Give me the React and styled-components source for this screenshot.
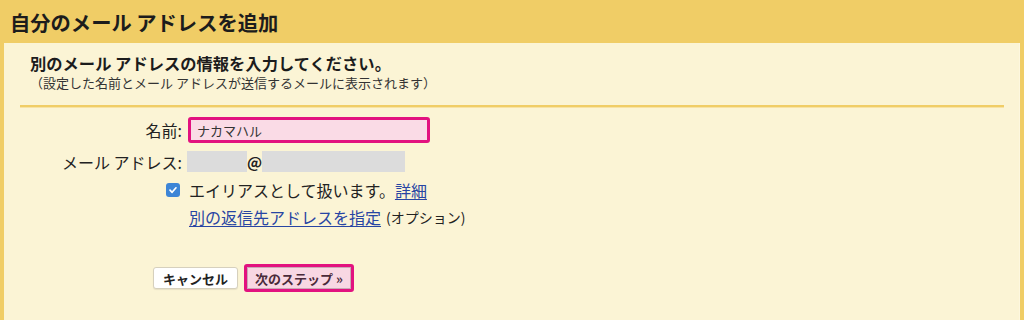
import styled, { createGlobalStyle } from "styled-components";

const GlobalStyle = createGlobalStyle`
  html, body {
    margin: 0;
    padding: 0;
    background: #f0cd66;
  }
  body {
    font-family: "Noto Sans CJK JP", "Noto Sans", sans-serif;
    color: #222;
  }
`;

const Page = styled.div`
  width: 1024px;
  height: 320px;
  overflow: hidden;
  background: #f0cd66;
  display: flex;
  flex-direction: column;
`;

const Header = styled.h1`
  margin: 0;
  height: 43px;
  padding-left: 10px;
  display: flex;
  align-items: center;
  font-size: 20.3px;
  font-weight: 700;
  color: #1c1c1c;
`;

const Panel = styled.div`
  flex: 1;
  margin: 0 4px;
  background: #fbf4d5;
  border-right: 1px solid #fdf7df;
  display: flex;
  flex-direction: column;
`;

const Intro = styled.div`
  padding: 9px 0 0 26px;
  height: 53px;
`;

const Lead = styled.div`
  font-size: 16.3px;
  font-weight: 700;
  line-height: 22px;
  color: #1c1c1c;
`;

const Note = styled.div`
  font-size: 13px;
  line-height: 18px;
  color: #333;
`;

const Divider = styled.hr`
  margin: 0 15px 0 16px;
  border: 0;
  height: 2px;
  background: #f0cd66;
  box-shadow: 0 1px 0 #f7e3a4;
`;

const Form = styled.div`
  padding-top: 10px;
  display: flex;
  flex-direction: column;
`;

const Row = styled.div`
  display: flex;
  align-items: center;
  height: ${(p) => p.h}px;
  margin-bottom: ${(p) => p.gap || 0}px;
`;

const Label = styled.div`
  width: 181px;
  font-size: 16px;
  color: #222;
  padding-right: 3px;
  box-sizing: border-box;
  margin-right: ${(p) => p.mr ?? 3}px;
  display: flex;
  justify-content: flex-end;
`;

const LabelPad = styled.div`
  width: 181px;
  display: flex;
  justify-content: flex-end;
  padding-right: 5px;
  box-sizing: border-box;
  margin-right: 4px;
`;

const NameInput = styled.div`
  width: 242px;
  height: 26px;
  box-sizing: border-box;
  border: 3px solid #e2127f;
  border-radius: 3px;
  background: #fadbe6;
  font-size: 13px;
  display: flex;
  align-items: center;
  padding-left: 6px;
  color: #333;
`;

const Masked = styled.div`
  width: ${(p) => p.w}px;
  height: 21px;
  background: #dcdcdc;
`;

const At = styled.span`
  width: 15px;
  text-align: center;
  font-size: 15px;
  font-weight: 700;
  color: #222;
`;

const Check = styled.span`
  width: 14px;
  height: 14px;
  border-radius: 3px;
  background: #3d85d6;
  display: flex;
  align-items: center;
  justify-content: center;
`;

const Text = styled.span`
  font-size: ${(p) => p.size || 16}px;
  margin-left: ${(p) => p.ml || 0}px;
  color: #222;
`;

const LinkText = styled.a`
  font-size: 16px;
  color: #2845a3;
  text-decoration: underline;
  text-underline-offset: 2px;
  margin-left: ${(p) => p.ml || 0}px;
`;

const Actions = styled.div`
  display: flex;
  align-items: center;
  gap: 6px;
  padding: 37px 0 0 149px;
`;

const Button = styled.button`
  font-family: "Noto Sans CJK JP", "Noto Sans", sans-serif;
  font-size: 13px;
  font-weight: 700;
  color: ${(p) => (p.primary ? "#4a2a3a" : "#222")};
  height: ${(p) => (p.primary ? 28 : 22)}px;
  padding: 0 ${(p) => (p.primary ? 8 : 9)}px;
  background: ${(p) => (p.primary ? "#f8d7e3" : "#fff")};
  border: ${(p) => (p.primary ? "3px solid #e2127f" : "1px solid #d6d0bd")};
  border-radius: 3px;
  box-shadow: ${(p) => (p.primary ? "inset 0 0 0 1px #c9a9b6" : "0 1px 1px rgba(0,0,0,0.08)")};
  display: flex;
  align-items: center;
  cursor: pointer;
`;

export default function App() {
  return (
    <>
      <GlobalStyle />
      <Page>
        <Header>自分のメール アドレスを追加</Header>
        <Panel>
          <Intro>
            <Lead>別のメール アドレスの情報を入力してください。</Lead>
            <Note>（設定した名前とメール アドレスが送信するメールに表示されます）</Note>
          </Intro>
          <Divider />
          <Form>
            <Row h={26} gap={8}>
              <Label>名前:</Label>
              <NameInput>ナカマハル</NameInput>
            </Row>
            <Row h={21} gap={8}>
              <Label mr={2}>メール アドレス:</Label>
              <Masked w={60} />
              <At>@</At>
              <Masked w={143} />
            </Row>
            <Row h={20} gap={7}>
              <LabelPad>
                <Check>
                  <svg width="10" height="10" viewBox="0 0 10 10">
                    <path d="M2 5.2 L4.1 7.3 L8 2.8" fill="none" stroke="#fff" strokeWidth="1.7" strokeLinecap="round" strokeLinejoin="round" />
                  </svg>
                </Check>
              </LabelPad>
              <Text>エイリアスとして扱います。</Text>
              <LinkText>詳細</LinkText>
            </Row>
            <Row h={20}>
              <LabelPad />
              <LinkText>別の返信先アドレスを指定</LinkText>
              <Text size={14} ml={5}>(オプション)</Text>
            </Row>
          </Form>
          <Actions>
            <Button>キャンセル</Button>
            <Button primary>次のステップ »</Button>
          </Actions>
        </Panel>
      </Page>
    </>
  );
}
